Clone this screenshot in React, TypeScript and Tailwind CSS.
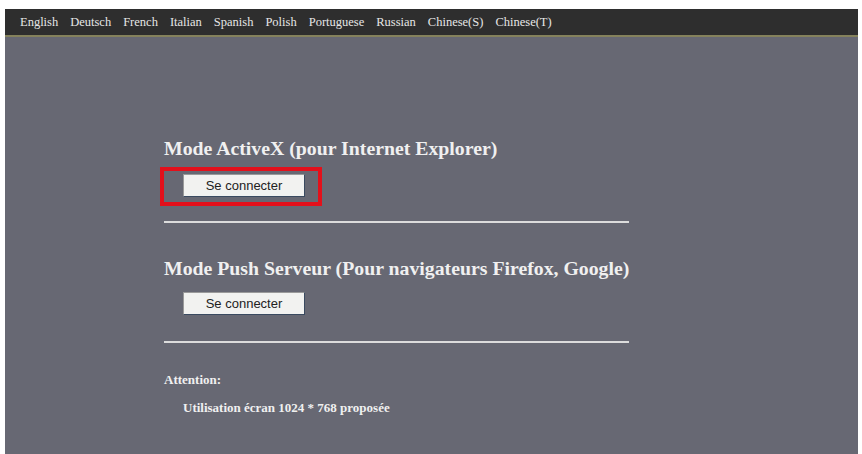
import React from "react";

const languages = [
  "English",
  "Deutsch",
  "French",
  "Italian",
  "Spanish",
  "Polish",
  "Portuguese",
  "Russian",
  "Chinese(S)",
  "Chinese(T)",
];

function ConnectButton() {
  return (
    <button
      type="button"
      className="w-[122px] h-[23px] bg-[#f2f2f0] border border-[#9a9a9a] border-b-[#3a4a60] border-r-[#3a4a60] text-[13px] text-[#222] leading-none"
      style={{ fontFamily: '"Liberation Sans", Arial, sans-serif' }}
    >
      Se connecter
    </button>
  );
}

export default function App() {
  return (
    <div className="w-[862px] h-[454px] bg-white pt-[9px] pl-[5px] pr-[4px] overflow-hidden">
      <div
        className="h-[445px] bg-[#676873] flex flex-col"
        style={{ fontFamily: '"Liberation Serif", "Times New Roman", serif' }}
      >
        <nav className="h-[28px] bg-[#2e2e2e] border-b-2 border-[#85825c] flex items-center pl-[15px] gap-[12px] text-[12.5px] text-[#e6e6e6]">
          {languages.map((l) => (
            <a key={l} className="cursor-pointer">
              {l}
            </a>
          ))}
        </nav>

        <main className="pl-[159px] pt-[100px] w-[700px]">
          <section className="w-[465px]">
            <h2 className="text-[19.8px] font-bold text-[#f0f0f0] leading-[22px] whitespace-nowrap">
              Mode ActiveX (pour Internet Explorer)
            </h2>
            <div className="relative mt-[14px] ml-[19px]">
              <ConnectButton />
              <span className="absolute left-[-23px] top-[-6px] w-[162px] h-[39px] border-[4px] border-[#e3101b] pointer-events-none" />
            </div>
            <hr className="mt-[24px] border-0 h-[2px] bg-[#dcdcdc]" />
          </section>

          <section className="w-[465px] mt-[34px]">
            <h2 className="text-[19.8px] font-bold text-[#f0f0f0] leading-[22px] whitespace-nowrap">
              Mode Push Serveur (Pour navigateurs Firefox, Google)
            </h2>
            <div className="mt-[12px] ml-[19px]">
              <ConnectButton />
            </div>
            <hr className="mt-[26px] border-0 h-[2px] bg-[#dcdcdc]" />
          </section>

          <section className="mt-[29px] text-[13px] font-bold text-[#f0f0f0]">
            <p className="leading-[15px]">Attention:</p>
            <p className="mt-[13px] ml-[19px] leading-[15px]">
              Utilisation écran 1024 * 768 proposée
            </p>
          </section>
        </main>
      </div>
    </div>
  );
}
